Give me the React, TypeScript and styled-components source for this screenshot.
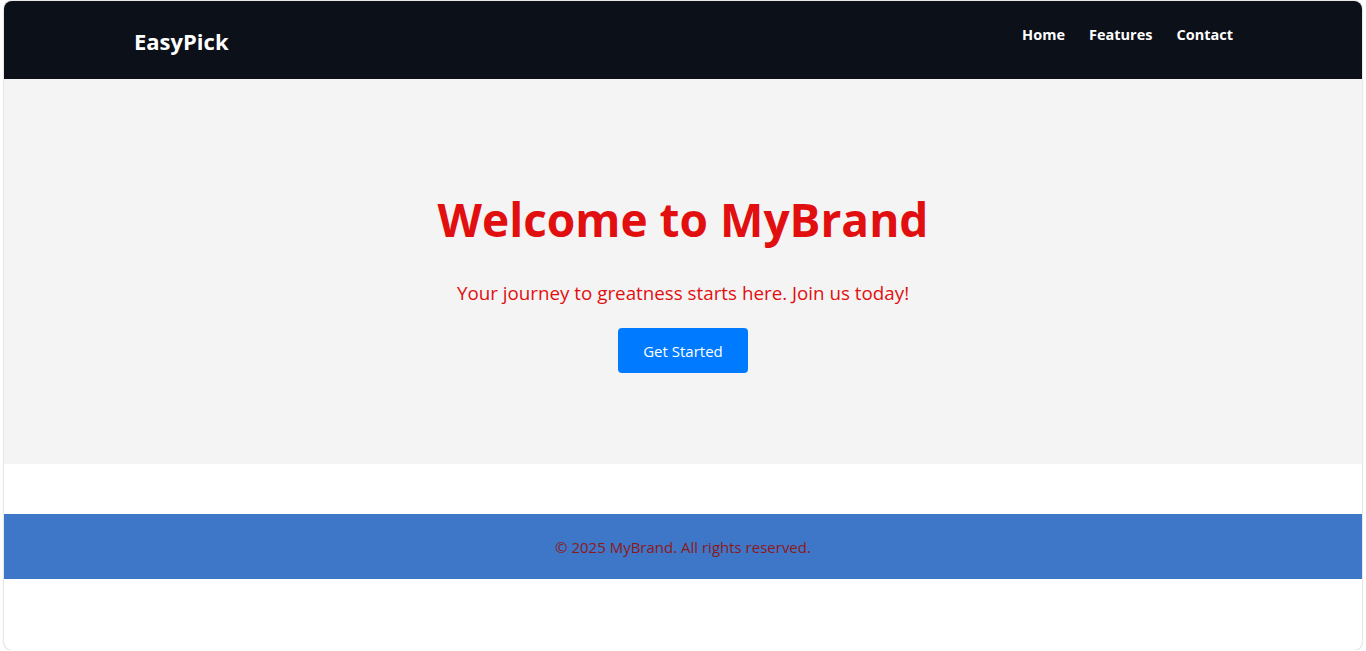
import React from "react";
import styled, { createGlobalStyle } from "styled-components";

const Global = createGlobalStyle`
  html, body { margin: 0; padding: 0; background: #ffffff; }
  body { font-family: "Open Sans", "Noto Sans", sans-serif; }
  * { box-sizing: border-box; }
`;

const Frame = styled.div`
  margin: 1px 4px 0 4px;
  height: 649px;
  border-radius: 8px;
  overflow: hidden;
  background: #ffffff;
  box-shadow: 0 0 2px rgba(0, 0, 0, 0.35);
`;

const Header = styled.header`
  height: 78px;
  background: #0c1018;
  display: flex;
  justify-content: space-between;
  align-items: center;
  padding: 0 129px 0 130px;
`;

const Logo = styled.div`
  color: #ffffff;
  font-size: 22px;
  font-weight: 700;
  line-height: 30px;
  padding-top: 2px;
`;

const Nav = styled.nav`
  display: flex;
  gap: 24px;
  padding-bottom: 10px;
`;

const NavLink = styled.a`
  color: #ffffff;
  font-size: 14.5px;
  font-weight: 700;
  text-decoration: none;
  line-height: 20px;
`;

const Hero = styled.section`
  height: 385px;
  background: #f4f4f4;
  display: flex;
  flex-direction: column;
  align-items: center;
  padding-top: 111px;
  text-align: center;
`;

const Title = styled.h1`
  margin: 0 0 31px;
  font-size: 46px;
  line-height: 58px;
  font-weight: 700;
  color: #e10f0f;
`;

const Subtitle = styled.p`
  margin: 0 0 21px;
  font-size: 18.8px;
  line-height: 28px;
  color: #e10f0f;
`;

const Button = styled.button`
  height: 45px;
  padding: 0 25px;
  border: none;
  border-radius: 4px;
  background: #007bff;
  color: #ffffff;
  font-family: inherit;
  font-size: 15px;
`;

const Spacer = styled.div`
  height: 50px;
`;

const Footer = styled.footer`
  height: 65px;
  background: #3e76c8;
  display: flex;
  align-items: center;
  justify-content: center;
  color: #8b1a1a;
  font-size: 15px;
`;

export default function App() {
  return (
    <>
      <Global />
      <Frame>
        <Header>
          <Logo>EasyPick</Logo>
          <Nav>
            <NavLink href="#">Home</NavLink>
            <NavLink href="#">Features</NavLink>
            <NavLink href="#">Contact</NavLink>
          </Nav>
        </Header>
        <Hero>
          <Title>Welcome to MyBrand</Title>
          <Subtitle>Your journey to greatness starts here. Join us today!</Subtitle>
          <Button>Get Started</Button>
        </Hero>
        <Spacer />
        <Footer>© 2025 MyBrand. All rights reserved.</Footer>
      </Frame>
    </>
  );
}
